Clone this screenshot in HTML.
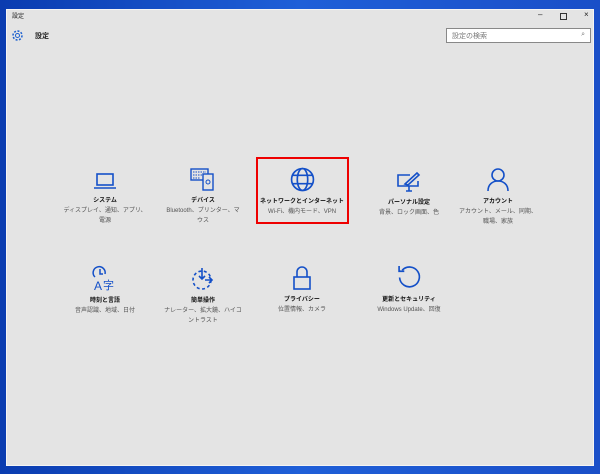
<!DOCTYPE html><html><head><meta charset="utf-8"><style>
body{margin:0;width:600px;height:474px;overflow:hidden;background:linear-gradient(90deg,#0a3cb0,#1f5fd8 50%,#1a4fc8);font-family:"Liberation Sans","Noto Sans CJK JP",sans-serif;position:relative}
.win{position:absolute;left:6px;top:9px;width:588px;height:457px;background:#e4e4e4;border:1px solid #f4f4f4;box-sizing:border-box}
.t{position:absolute;font-size:7px;color:#222}
.tile{position:absolute;width:100px;text-align:center;font-size:6px;line-height:10px;color:#555}
.tile b{display:block;color:#111;font-weight:bold;font-size:6px}
.tile svg{display:block;margin:0 auto 5px}
</style></head><body>
<div class="win"></div>
<div class="t" style="left:12px;top:11px;font-size:6px">設定</div>
<div class="t" style="left:538px;top:10px;font-size:8px">–</div>
<div style="position:absolute;left:560px;top:13px;width:5px;height:5px;border:1px solid #333"></div>
<div class="t" style="left:584px;top:10px;font-size:8px">×</div>
<svg style="position:absolute;left:11px;top:29px" width="13" height="13" viewBox="0 0 13 13"><circle cx="6.5" cy="6.5" r="4.5" fill="none" stroke="#1a5fd0" stroke-width="1.5" stroke-dasharray="2 1.5"/><circle cx="6.5" cy="6.5" r="2" fill="none" stroke="#1a5fd0"/></svg>
<div class="t" style="left:35px;top:31px;font-weight:bold">設定</div>
<div style="position:absolute;left:446px;top:28px;width:145px;height:15px;border:1px solid #888;background:#fff;box-sizing:border-box;font-size:7px;color:#777;padding:2px 5px">設定の検索<span style="float:right">⌕</span></div>
<div style="position:absolute;left:256px;top:157px;width:93px;height:67px;border:2px solid #e00;box-sizing:border-box"></div>

<div class="tile" style="left:55px;top:171px"><svg width="24" height="20" viewBox="0 0 24 20"><rect x="4" y="3" width="16" height="11" fill="none" stroke="#1450c8" stroke-width="1.6"/><path d="M1 17H23" stroke="#1450c8" stroke-width="1.6"/></svg><b>システム</b>ディスプレイ、通知、アプリ、<br>電源</div>
<div class="tile" style="left:153px;top:168px"><svg width="26" height="23" viewBox="0 0 26 23"><rect x="1" y="1" width="17" height="11" fill="none" stroke="#1450c8" stroke-width="1.4"/><path d="M3 4H16M3 7H16M3 10H10" stroke="#1450c8" stroke-dasharray="1.5 1"/><rect x="13" y="6" width="10" height="16" fill="#e4e4e4" stroke="#1450c8" stroke-width="1.4"/><circle cx="18" cy="14" r="2" fill="none" stroke="#1450c8"/></svg><b>デバイス</b>Bluetooth、プリンター、マ<br>ウス</div>
<div class="tile" style="left:252px;top:167px"><svg width="25" height="25" viewBox="0 0 24 24"><g fill="none" stroke="#1450c8" stroke-width="1.6"><circle cx="12" cy="12" r="10.5"/><ellipse cx="12" cy="12" rx="5" ry="10.5"/><path d="M2 8H22M2 16H22"/></g></svg><b>ネットワークとインターネット</b>Wi-Fi、機内モード、VPN</div>
<div class="tile" style="left:359px;top:171px"><svg width="26" height="22" viewBox="0 0 26 22"><g fill="none" stroke="#1450c8" stroke-width="1.6"><path d="M14 4H2V15H22V10"/><path d="M10 20H16M13 15V20"/><path d="M9 13L21 2L23 4L12 14Z"/></g></svg><b>パーソナル設定</b>背景、ロック画面、色</div>
<div class="tile" style="left:448px;top:167px"><svg width="24" height="25" viewBox="0 0 24 25"><g fill="none" stroke="#1450c8" stroke-width="1.6"><circle cx="12" cy="8" r="6"/><path d="M2 24C2 17 7 14 12 14S22 17 22 24"/></g></svg><b>アカウント</b>アカウント、メール、同期、<br>職場、家族</div>

<div class="tile" style="left:55px;top:265px"><svg width="26" height="26" viewBox="0 0 26 26"><g fill="none" stroke="#1450c8" stroke-width="1.5"><path d="M3 12A6 6 0 1 1 13 9"/><path d="M8 4V9H11"/></g><text x="2" y="25" font-size="12" fill="#1450c8" font-family="Liberation Sans">A</text><text x="11" y="24" font-size="11" fill="#1450c8" font-family="Noto Sans CJK JP">字</text></svg><b>時刻と言語</b>音声認識、地域、日付</div>
<div class="tile" style="left:153px;top:266px"><svg width="26" height="25" viewBox="0 0 26 25"><g fill="none" stroke="#1450c8" stroke-width="1.6"><circle cx="12" cy="14" r="9" stroke-dasharray="3 2.5"/><path d="M12 2V13M9 10L12 13L15 10M15 14H22M19 11L22 14L19 17"/></g></svg><b>簡単操作</b>ナレーター、拡大鏡、ハイコ<br>ントラスト</div>
<div class="tile" style="left:252px;top:265px"><svg width="22" height="25" viewBox="0 0 22 25"><g fill="none" stroke="#1450c8" stroke-width="1.6"><rect x="3" y="12" width="16" height="12"/><path d="M6 12V7A5 5 0 0 1 16 7V12"/></g></svg><b>プライバシー</b>位置情報、カメラ</div>
<div class="tile" style="left:359px;top:265px"><svg width="25" height="25" viewBox="0 0 24 24"><g fill="none" stroke="#1450c8" stroke-width="1.6"><path d="M5 5A9.5 9.5 0 1 1 2.5 12"/><path d="M2 1V6H7"/></g></svg><b>更新とセキュリティ</b>Windows Update、回復</div>
</body></html>
